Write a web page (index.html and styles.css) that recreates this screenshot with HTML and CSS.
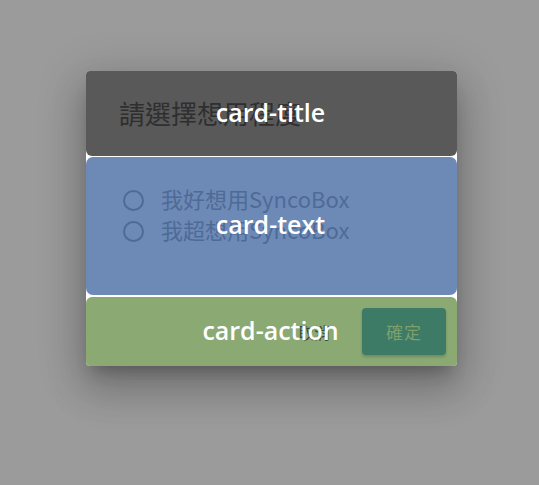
FILE: index.html
```html
<!DOCTYPE html>
<html lang="zh-Hant">
<head>
<meta charset="utf-8">
<title>Card</title>
<link rel="stylesheet" href="styles.css">
</head>
<body>
<div class="card">
  <div class="section title">
    <span class="title-text">請選擇想用程度</span>
    <span class="tag">card-title</span>
  </div>
  <div class="section text">
    <div class="radios">
      <label class="radio"><span class="circle"></span><span class="lbl">我好想用SyncoBox</span></label>
      <label class="radio"><span class="circle"></span><span class="lbl">我超想用SyncoBox</span></label>
    </div>
    <span class="tag">card-text</span>
  </div>
  <div class="section action">
    <span class="btn-text">取消</span>
    <span class="btn-ok">確定</span>
    <span class="tag">card-action</span>
  </div>
</div>
</body>
</html>
```
FILE: styles.css
```css
html, body {
  margin: 0;
  padding: 0;
}
body {
  background: #9b9b9b;
  width: 539px;
  height: 485px;
  overflow: hidden;
  font-family: "Noto Sans CJK TC", "Noto Sans", sans-serif;
}
.card {
  margin: 71px 0 0 86px;
  width: 371px;
  background: #ffffff;
  border-radius: 4px;
  box-shadow: 0 11px 15px -7px rgba(0,0,0,0.25), 0 24px 38px 3px rgba(0,0,0,0.16), 0 9px 46px 8px rgba(0,0,0,0.14);
  display: flex;
  flex-direction: column;
  gap: 1px;
}
.section {
  position: relative;
  border-radius: 6px;
  display: flex;
}
.title {
  background: #595959;
  height: 85px;
  align-items: center;
  padding-left: 33px;
  border-radius: 4px 4px 6px 6px;
}
.title-text {
  font-size: 26px;
  color: #2f2f2f;
  line-height: 1;
  padding-bottom: 2px;
}
.text {
  background: #6d89b6;
  height: 138px;
  padding: 33px 0 0 37px;
  box-sizing: border-box;
  border-radius: 7px;
}
.radios {
  display: flex;
  flex-direction: column;
  gap: 10px;
}
.radio {
  display: flex;
  align-items: center;
  height: 21px;
}
.circle {
  width: 21px;
  height: 21px;
  box-sizing: border-box;
  border: 2px solid #4e6b97;
  border-radius: 50%;
}
.lbl {
  margin-left: 17px;
  font-size: 22px;
  color: #4e6b97;
  line-height: 1;
  padding-bottom: 5px;
}
.action {
  background: #8aa973;
  height: 69px;
  margin-top: 1px;
  align-items: center;
  justify-content: flex-end;
  padding-right: 11px;
  border-radius: 6px 6px 4px 4px;
}
.btn-text {
  font-size: 16px;
  color: #3a4a30;
  margin-right: 32px;
}
.btn-ok {
  width: 84px;
  height: 47px;
  background: #3e7b66;
  border-radius: 4px;
  box-shadow: 0 2px 3px rgba(0,0,0,0.18);
  display: flex;
  align-items: center;
  justify-content: center;
  font-size: 17px;
  color: #7d9f6c;
  letter-spacing: 1px;
}
.tag {
  position: absolute;
  left: 0;
  right: 0;
  top: 50%;
  transform: translateY(-50%);
  margin-top: -2px;
  text-align: center;
  font-family: "Open Sans", "Noto Sans", sans-serif;
  font-weight: 600;
  font-size: 25px;
  color: #ffffff;
  line-height: 1;
  padding-right: 2px;
}
```
